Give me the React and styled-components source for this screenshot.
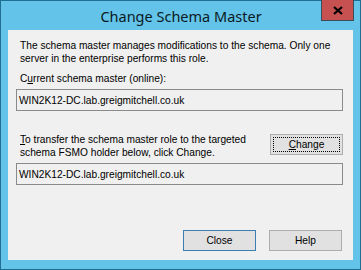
import styled, { createGlobalStyle } from "styled-components";

const GlobalStyle = createGlobalStyle`
  html, body {
    margin: 0;
    padding: 0;
    background: #ffffff;
  }
  body {
    font-family: "Liberation Sans", Arial, sans-serif;
  }
`;

const Window = styled.div`
  width: 361px;
  height: 270px;
  box-sizing: border-box;
  border: 1px solid #1f6e93;
  background: #63c3e9;
  display: flex;
  flex-direction: column;
  padding: 0 7px 9px 7px;
`;

const TitleBar = styled.div`
  height: 29px;
  display: grid;
  grid-template-columns: 1fr auto 1fr;
  align-items: start;
  margin: 0 -1px 0 0;
`;

const Title = styled.div`
  grid-column: 2;
  font-family: "Noto Sans", "Open Sans", sans-serif;
  font-size: 14.5px;
  line-height: 30px;
  color: #0b1a24;
  white-space: nowrap;
`;

const CloseButton = styled.div`
  grid-column: 3;
  justify-self: end;
  width: 33px;
  height: 21px;
  margin-top: -1px;
  box-sizing: border-box;
  border: 1px solid #3a4d5a;
  border-top: none;
  background: #c75050;
  display: flex;
  align-items: center;
  justify-content: center;
`;

const Body = styled.div`
  flex: 1;
  background: #f0f0f0;
  display: flex;
  flex-direction: column;
  padding: 9px 10px 9px 8px;
  font-size: 10.2px;
  line-height: 13px;
  color: #000;
  white-space: nowrap;
`;

const Text = styled.div`
  padding-left: 4px;
  margin-top: ${(p) => p.$top || 0}px;
`;

const Field = styled.div`
  height: 22px;
  box-sizing: border-box;
  border: 1px solid #8a8a8a;
  background: #f0f0f0;
  margin-top: ${(p) => p.$top || 0}px;
  padding: 0 0 0 2px;
  display: flex;
  align-items: center;
`;

const TransferRow = styled.div`
  display: flex;
  justify-content: space-between;
  align-items: flex-start;
  margin-top: 22px;
`;

const Button = styled.div`
  width: 73px;
  height: 21px;
  box-sizing: border-box;
  border: 1px solid ${(p) => (p.$default ? "#3c7fb1" : "#adadad")};
  background: #e1e1e1;
  display: flex;
  align-items: center;
  justify-content: center;
  position: relative;
  margin-top: ${(p) => p.$top || 0}px;
  ${(p) =>
    p.$focus &&
    `
    &::after {
      content: "";
      position: absolute;
      inset: 2px;
      border: 1px dotted #000;
    }
  `}
`;

const Footer = styled.div`
  margin-top: auto;
  display: flex;
  justify-content: flex-end;
  gap: 13px;
  padding-right: 1px;
`;

const U = styled.span`
  text-decoration: underline;
`;

export default function App() {
  return (
    <>
      <GlobalStyle />
      <Window>
        <TitleBar>
          <Title>Change Schema Master</Title>
          <CloseButton>
            <svg width="10" height="9" viewBox="0 0 10 9">
              <path d="M1 1 L9 8 M9 1 L1 8" stroke="#000" strokeWidth="2.2" />
            </svg>
          </CloseButton>
        </TitleBar>
        <Body>
          <Text>
            The schema master manages modifications to the schema. Only one
            <br />
            server in the enterprise performs this role.
          </Text>
          <Text $top={7}>
            C<U>u</U>rrent schema master (online):
          </Text>
          <Field $top={4}>WIN2K12-DC.lab.greigmitchell.co.uk</Field>
          <TransferRow>
            <Text>
              <U>T</U>o transfer the schema master role to the targeted
              <br />
              schema FSMO holder below, click Change.
            </Text>
            <Button $focus $top={1}>
              <span>
                <U>C</U>hange
              </span>
            </Button>
          </TransferRow>
          <Field $top={4}>WIN2K12-DC.lab.greigmitchell.co.uk</Field>
          <Footer>
            <Button $default>Close</Button>
            <Button>Help</Button>
          </Footer>
        </Body>
      </Window>
    </>
  );
}
